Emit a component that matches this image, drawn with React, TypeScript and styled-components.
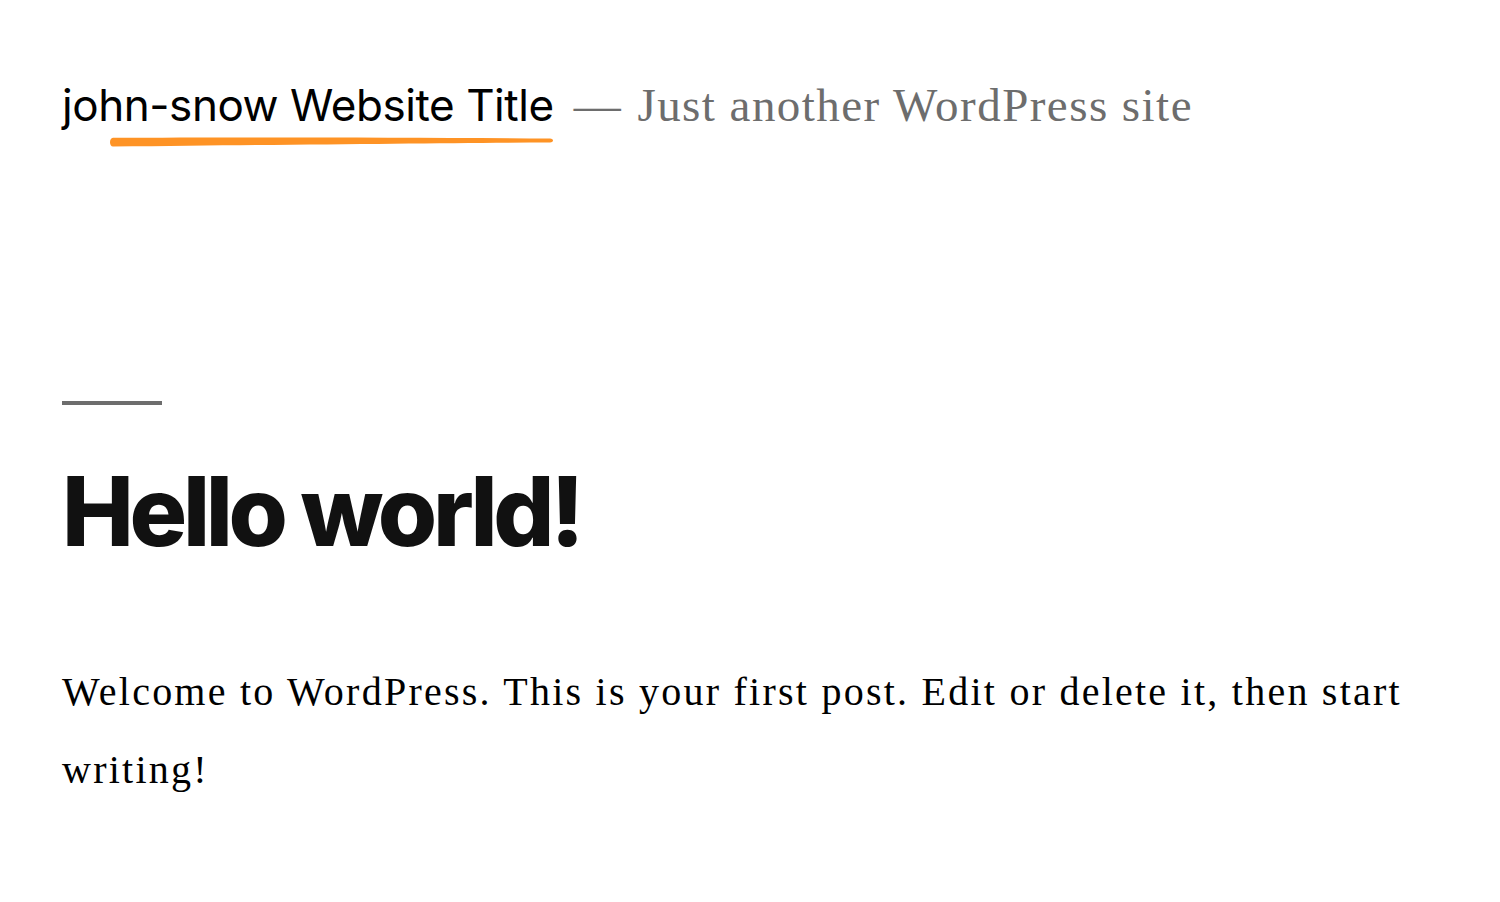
import React from "react";
import styled, { createGlobalStyle } from "styled-components";

const Global = createGlobalStyle`
  html, body { margin: 0; padding: 0; background: #ffffff; }
  body { font-family: "Liberation Serif", serif; color: #000; }
`;

const Page = styled.div`
  padding: 0 62px;
`;

const Header = styled.header`
  display: flex;
  align-items: baseline;
  padding-top: 78px;
  height: 82px;
`;

const TitleWrap = styled.div`
  position: relative;
`;

const SiteTitle = styled.span`
  font-family: "Inter", sans-serif;
  font-size: 44px;
  font-weight: 400;
  letter-spacing: -0.01em;
  color: #000;
`;

const Underline = styled.svg`
  position: absolute;
  left: 47px;
  top: 58px;
  width: 445px;
  height: 12px;
`;

const Tagline = styled.span`
  font-family: "Liberation Serif", serif;
  font-size: 47px;
  color: #6d6d6d;
  margin-left: 20px;
  letter-spacing: 0.031em;
`;

const Dash = styled.span`
  margin-right: 2px;
`;

const Divider = styled.hr`
  width: 100px;
  height: 4px;
  border: 0;
  background: #6d6d6d;
  margin: 241px 0 0 0;
`;

const Heading = styled.h1`
  font-family: "Inter", sans-serif;
  font-weight: 800;
  font-size: 96px;
  letter-spacing: -0.045em;
  color: #111;
  margin: 58px 0 0 0;
  line-height: 1;
`;

const Body = styled.p`
  font-family: "Liberation Serif", serif;
  font-size: 40px;
  line-height: 78px;
  letter-spacing: 0.056em;
  color: #000;
  margin: 94px 0 0 0;
  max-width: 1376px;
`;

export default function App() {
  return (
    <Page>
      <Global />
      <Header>
        <TitleWrap>
          <SiteTitle>john-snow Website Title</SiteTitle>
          <Underline viewBox="0 0 445 12" preserveAspectRatio="none">
            <path
              d="M4 1.8 C 120 1.2, 300 1.4, 441 2.4 C 445 2.8, 445 6, 441 6.4 C 330 7, 200 8.5, 4 10.6 C 0 10.6, 0 1.8, 4 1.8 Z"
              fill="#fe9325"
            />
          </Underline>
        </TitleWrap>
        <Tagline>
          <Dash>—</Dash> Just another WordPress site
        </Tagline>
      </Header>
      <main>
        <Divider />
        <Heading>Hello world!</Heading>
        <Body>
          Welcome to WordPress. This is your first post. Edit or delete it, then start writing!
        </Body>
      </main>
    </Page>
  );
}
